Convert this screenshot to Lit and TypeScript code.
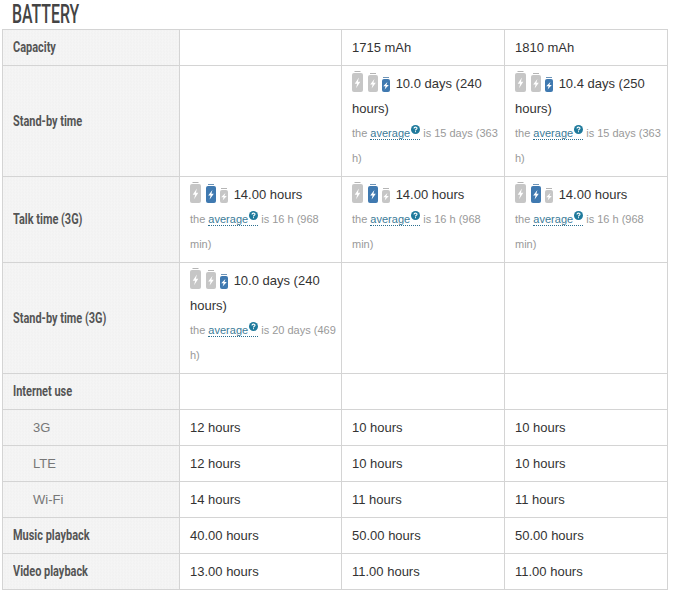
import { LitElement, html, css, svg } from "lit";
import { customElement } from "lit/decorators.js";

const SIZES = [
  [11, 19],
  [10, 17],
  [8, 13],
];

const batt = (w: number, h: number, blue: boolean) => html`<svg class="batt" width=${w} height=${h + 2} viewBox="0 0 ${w} ${h + 2}">
  <rect x=${w / 2 - 3} y="0" width="6" height="1" fill=${blue ? "#6f95b8" : "#b5b5b5"}></rect>
  <rect x="0" y="2" width=${w} height=${h} rx="2" fill=${blue ? "#3f79b0" : "#c6c6c6"}></rect>
  ${svg`<path d="M${w / 2 + 1.4} ${2 + h * 0.24} L${w / 2 - 2.8} ${2 + h * 0.56} H${w / 2 - 0.4} L${w / 2 - 1.4} ${2 + h * 0.8} L${w / 2 + 2.8} ${2 + h * 0.46} H${w / 2 + 0.4} Z" fill="#fff"></path>`}
</svg>`;

const rate = (level: number) =>
  html`<span class="batts">${SIZES.map((s, i) => batt(s[0], s[1], i === level))}</span>`;

const cell = (level: number, value: string, avg: string) => html`<td>
  ${rate(level)}<span> ${value}</span>
  <div class="avg"><span>the </span><span class="link"><span>average</span><svg class="q" width="9" height="9" viewBox="0 0 9 9"><circle cx="4.5" cy="4.5" r="4.5" fill="#1f7a9c"></circle><path d="M3 3.4 C3 1.7 6 1.7 6 3.3 C6 4.3 4.5 4.3 4.5 5.4" fill="none" stroke="#fff" stroke-width="1.1"></path><rect x="4" y="6.2" width="1" height="1" fill="#fff"></rect></svg></span><span> is ${avg}</span></div>
</td>`;

const label = (t: string) => html`<span class="lbl">${t}</span>`;

@customElement("app-root")
export class AppRoot extends LitElement {
  static styles = css`
    :host { display: block; width: 673px; height: 592px; background: #fff; overflow: hidden; font-family: "Liberation Sans", Arial, sans-serif; }
    h2 { margin: 0; padding: 0 0 0 12px; height: 29px; font: 500 26px/28px Roboto, "Liberation Sans", sans-serif; color: #444; text-transform: uppercase; }
    h2 span { display: inline-block; transform: scaleX(0.61); transform-origin: left center; white-space: nowrap; }
    table { border-collapse: collapse; table-layout: fixed; width: 666px; margin-left: 2px; font-size: 13px; line-height: 25px; color: #333; }
    td, th { border: 1px solid #d4d4d4; padding: 5px 2px 5px 10px; text-align: left; vertical-align: middle; box-sizing: border-box; }
    th { font: 700 15px/25px Roboto, "Liberation Sans", sans-serif; color: #555; background-color: #f3f3f3; background-image: repeating-conic-gradient(#f0f0f0 0 25%, #f7f7f7 0 50%); background-size: 3px 3px; }
    .lbl { display: inline-block; transform: scaleX(0.73); transform-origin: left center; white-space: nowrap; }
    th.sub { font: 400 13px/25px "Liberation Sans", Arial, sans-serif; color: #777; padding-left: 30px; }
    .h36 td, .h36 th { height: 36px; }
    .avg { font-size: 11px; color: #999; }
    .link { color: #3b7b98; border-bottom: 1px dotted #2b6f8f; }
    .q { vertical-align: 3px; margin-left: 1px; }
    .batts { display: inline-flex; align-items: flex-end; gap: 5px; height: 10px; vertical-align: -4px; margin-right: 2px; }
    .batt { display: block; flex: none; }
    .batt:last-child { margin-left: -1px; }
  `;

  render() {
    return html`
      <h2><span>Battery</span></h2>
      <table>
        <colgroup><col style="width:177px"><col style="width:162px"><col style="width:163px"><col style="width:163px"></colgroup>
        <tr class="h36"><th>${label("Capacity")}</th><td></td><td>1715 mAh</td><td>1810 mAh</td></tr>
        <tr><th>${label("Stand-by time")}</th><td></td>
          ${cell(2, "10.0 days (240 hours)", "15 days (363 h)")}
          ${cell(2, "10.4 days (250 hours)", "15 days (363 h)")}</tr>
        <tr><th>${label("Talk time (3G)")}</th>
          ${cell(1, "14.00 hours", "16 h (968 min)")}
          ${cell(1, "14.00 hours", "16 h (968 min)")}
          ${cell(1, "14.00 hours", "16 h (968 min)")}</tr>
        <tr><th>${label("Stand-by time (3G)")}</th>
          ${cell(2, "10.0 days (240 hours)", "20 days (469 h)")}<td></td><td></td></tr>
        <tr class="h36"><th>${label("Internet use")}</th><td></td><td></td><td></td></tr>
        <tr class="h36"><th class="sub">3G</th><td>12 hours</td><td>10 hours</td><td>10 hours</td></tr>
        <tr class="h36"><th class="sub">LTE</th><td>12 hours</td><td>10 hours</td><td>10 hours</td></tr>
        <tr class="h36"><th class="sub">Wi-Fi</th><td>14 hours</td><td>11 hours</td><td>11 hours</td></tr>
        <tr class="h36"><th>${label("Music playback")}</th><td>40.00 hours</td><td>50.00 hours</td><td>50.00 hours</td></tr>
        <tr class="h36"><th>${label("Video playback")}</th><td>13.00 hours</td><td>11.00 hours</td><td>11.00 hours</td></tr>
      </table>
    `;
  }
}
